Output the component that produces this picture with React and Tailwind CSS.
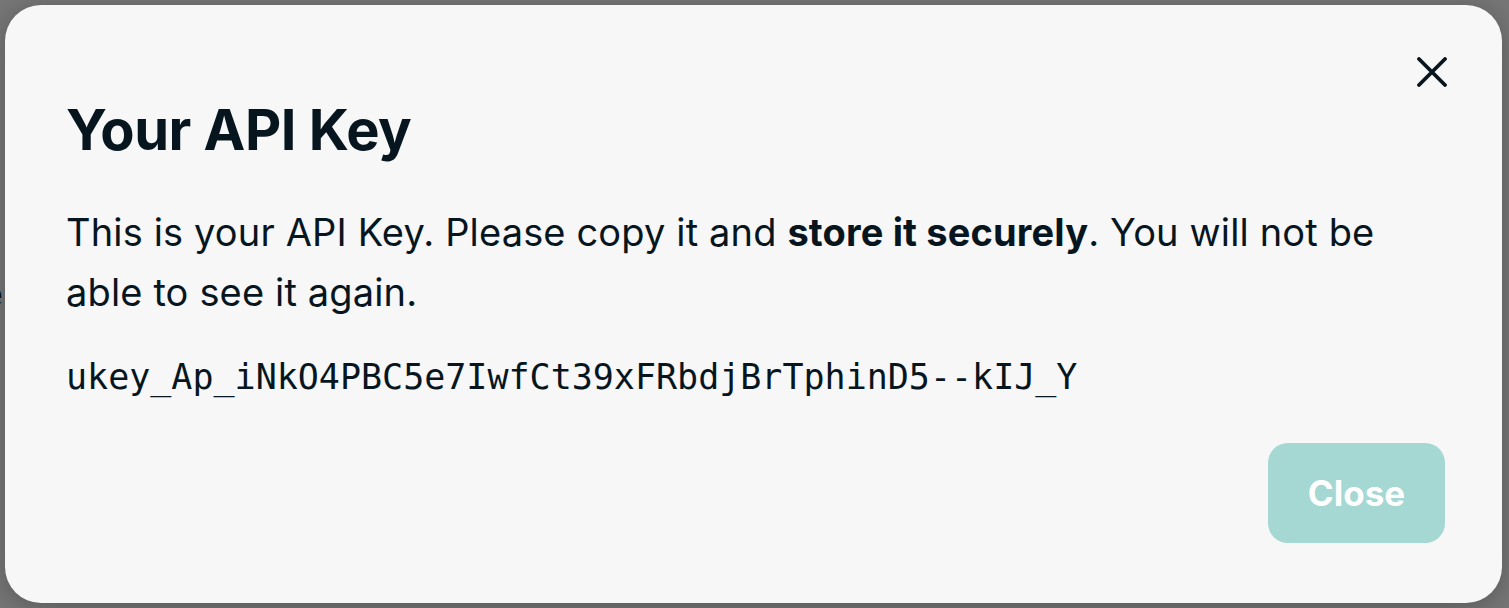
export default function App() {
  return (
    <div className="w-full h-[608px] bg-[#767676] pt-[5px] pl-[5px] pr-[7px] pb-[5px] relative overflow-hidden" style={{ fontFamily: 'Inter, "Noto Sans", sans-serif' }}>
      <div className="absolute left-0 top-[276px] text-[36px] leading-none text-[#0b1a22] -translate-x-[18px]">e</div>
      <div className="relative h-full w-full rounded-[36px] bg-[#f7f7f7] shadow-[0_4px_24px_rgba(0,0,0,0.25)] pl-[61px] pr-[57px] pt-[95px] pb-[60px] flex flex-col text-[#07161e]">
        <button className="absolute right-[55px] top-[52px] w-[30px] h-[30px] flex items-center justify-center">
          <svg width="30" height="30" viewBox="0 0 30 30" fill="none" stroke="#07161e" strokeWidth="3.8" strokeLinecap="round">
            <path d="M2 2 L28 28 M28 2 L2 28" />
          </svg>
        </button>
        <h1 className="text-[56px] leading-[60px] font-bold tracking-[-0.5px]">Your API Key</h1>
        <p className="mt-[42px] text-[38px] leading-[60px] font-normal tracking-[0.15px]">
          This is your API Key. Please copy it and <strong className="font-bold">store it securely</strong>. You will not be able to see it again.
        </p>
        <div className="mt-[35px] text-[35px] leading-[40px]" style={{ fontFamily: '"DejaVu Sans Mono", monospace' }}>
          ukey_Ap_iNkO4PBC5e7IwfCt39xFRbdjBrTphinD5--kIJ_Y
        </div>
        <div className="mt-auto flex justify-end">
          <button className="w-[177px] h-[100px] rounded-[20px] bg-[#a5d7d3] text-white text-[35px] font-bold">Close</button>
        </div>
      </div>
    </div>
  );
}
